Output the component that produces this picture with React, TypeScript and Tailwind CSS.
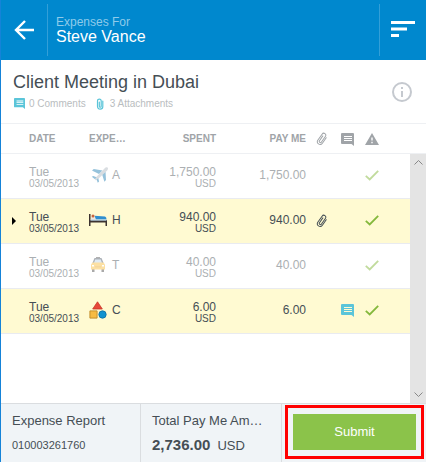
import type { ReactNode } from "react";

interface IconProps {
  className?: string;
}

interface Expense {
  id: number;
  day: string;
  date: string;
  type: string;
  icon: ReactNode;
  amount: string;
  currency: string;
  active: boolean;
  current?: boolean;
  hasAttachment?: boolean;
  hasComment?: boolean;
}

function CommentIcon({ className }: IconProps) {
  return (
    <svg viewBox="0 0 13 13" className={className} fill="currentColor" aria-hidden="true">
      <path
        fillRule="evenodd"
        d="M1 0h11a1 1 0 0 1 1 1v12l-2.500-2H1a1 1 0 0 1-1-1V1a1 1 0 0 1 1-1zM3 3v1h8V3zM3 5v1h8V5zM3 7v1h8V7z"
      />
    </svg>
  );
}

function ClipIcon({ className }: IconProps) {
  return (
    <svg
      viewBox="0 0 12 14"
      className={className}
      fill="none"
      stroke="currentColor"
      strokeLinecap="round"
      aria-hidden="true"
    >
      <path
        transform="rotate(35 6 7)"
        d="M8.700 3.500v6.700c0 3.800-5.400 3.800-5.400 0V3c0-2.800 4-2.800 4 0v6.800c0 1.700-2.400 1.700-2.400 0V4"
      />
    </svg>
  );
}

function SmallClipIcon({ className }: IconProps) {
  return (
    <svg
      viewBox="0 0 8 12"
      className={className}
      fill="none"
      stroke="currentColor"
      strokeWidth="1.200"
      strokeLinecap="round"
      aria-hidden="true"
    >
      <path d="M6.800 3v5.500c0 3.500-5.300 3.500-5.300 0V3c0-2.600 3.700-2.600 3.700 0v5.200c0 1.400-1.900 1.400-1.900 0V4" />
    </svg>
  );
}

function WarningIcon({ className }: IconProps) {
  return (
    <svg viewBox="0 0 14 12" className={className} fill="currentColor" aria-hidden="true">
      <path fillRule="evenodd" d="M7 0l7 12H0zM6.300 4.500v3h1.400v-3zM6.300 8.700v1.500h1.400V8.700z" />
    </svg>
  );
}

function CheckIcon({ className }: IconProps) {
  return (
    <svg
      viewBox="0 0 14 11"
      className={className}
      fill="none"
      stroke="currentColor"
      strokeWidth="1.800"
      aria-hidden="true"
    >
      <path d="M.8 5.800 4.700 9.500 13.200.9" />
    </svg>
  );
}

function PlaneIcon() {
  return (
    <svg viewBox="0 0 18 16" className="h-4 w-[18px]" aria-hidden="true">
      <path d="M1 3.500 2.800 2l8.700 1.500-3.500 3.500zM11 7l3.500-2.500L15 13l-1.600 1.800z" fill="#2f87b8" />
      <path d="M16.500.5c1 .8.300 2.300-.6 3.200L6.500 12.500l-2.500.8.600-2.500L13.500 1.500c.9-.9 2-1.600 3-1z" fill="#b4bcc4" />
      <path d="M.8 9.800l1.500-.8 3.200 1.200-1.500 2zM5.500 12.500l1.800-1.200.8 3.200-1.300 1.300z" fill="#2f87b8" />
    </svg>
  );
}

function BedIcon() {
  return (
    <svg viewBox="0 0 18 12" className="h-3 w-[18px]" aria-hidden="true">
      <path d="M0 0h1.500v6H18v6h-1.500V8.500h-15V12H0z" fill="#3d3330" />
      <path d="M2 3h5v3H2z" fill="#f0e6dc" />
      <circle cx="4" cy="2" r="1.500" fill="#c9643f" />
      <path d="M5.500 1.800l10.500.7q1.500.4 1.500 3H7z" fill="#2f8fd0" />
      <path d="M1.500 5.500H17.500v1.200H1.500z" fill="#b9d3e6" />
    </svg>
  );
}

function TaxiIcon() {
  return (
    <svg viewBox="0 0 14 15" className="h-[15px] w-3.5" aria-hidden="true">
      <path d="M5 0h4v1.500H5z" fill="#666" />
      <path d="M3.500 1h7L12.500 6h-11z" fill="#5b6470" />
      <path d="M4.200 2.500h5.600L11 6H3z" fill="#c2d8ea" />
      <path d="M1 12h2.500v3H1zM10.500 12H13v3h-2.500z" fill="#555" />
      <path d="M1.500 5.500h11L14 7.500V12.500H0V7.500z" fill="#fbc24a" />
      <path d="M1 8h2v1.500H1zM11 8h2v1.500h-2z" fill="#fff" />
      <path d="M4 9.500h6v.8H4z" fill="#d9a03a" />
    </svg>
  );
}

function ShapesIcon() {
  return (
    <svg viewBox="0 0 18 18" className="size-[18px]" aria-hidden="true">
      <path d="M8.500.8 13.300 8H3.700z" fill="#e8473a" stroke="#c73527" strokeWidth=".8" />
      <path d="M.9 9.900h7.200v7.200H.9z" fill="#f6bb43" stroke="#c08a28" strokeWidth=".9" />
      <circle cx="13.500" cy="13.500" r="3.700" fill="#1292cf" stroke="#0b6ea3" strokeWidth=".8" />
    </svg>
  );
}

const expenses: Expense[] = [
  {
    id: 1,
    day: "Tue",
    date: "03/05/2013",
    type: "A",
    icon: <PlaneIcon />,
    amount: "1,750.00",
    currency: "USD",
    active: false,
  },
  {
    id: 2,
    day: "Tue",
    date: "03/05/2013",
    type: "H",
    icon: <BedIcon />,
    amount: "940.00",
    currency: "USD",
    active: true,
    current: true,
    hasAttachment: true,
  },
  {
    id: 3,
    day: "Tue",
    date: "03/05/2013",
    type: "T",
    icon: <TaxiIcon />,
    amount: "40.00",
    currency: "USD",
    active: false,
  },
  {
    id: 4,
    day: "Tue",
    date: "03/05/2013",
    type: "C",
    icon: <ShapesIcon />,
    amount: "6.00",
    currency: "USD",
    active: true,
    hasComment: true,
  },
];

function Header() {
  return (
    <header className="flex h-[60px] items-stretch bg-[#0088ce] py-1 text-white">
      <button aria-label="Back" className="flex w-[47px] items-center justify-center border-r border-[#339fd8]">
        <svg
          viewBox="0 0 20 20"
          className="size-5"
          fill="none"
          stroke="currentColor"
          strokeWidth="2.400"
          aria-hidden="true"
        >
          <path d="M20 10H2M11 1 2 10l9 9" />
        </svg>
      </button>
      <div className="flex-1 pl-2 pt-[11px]">
        <p className="text-[12px] leading-[14px] text-[#8fcbea]">Expenses For</p>
        <h1 className="text-[16px] leading-[16px]">Steve Vance</h1>
      </div>
      <button aria-label="Sort" className="flex w-[47px] items-center border-l border-[#339fd8] pb-0.5 pl-[11px]">
        <svg viewBox="0 0 24 16" className="h-4 w-6" fill="currentColor" aria-hidden="true">
          <path d="M0 0h24v3H0zM0 6.500h16v3H0zM0 13h8v3H0z" />
        </svg>
      </button>
    </header>
  );
}

function ReportTitle() {
  return (
    <section className="flex h-[64px] items-center border-b border-[#eef0f3] pl-3 pr-3.5">
      <div className="flex-1 pb-0.5">
        <h2 className="text-[18px] leading-[22px]">Client Meeting in Dubai</h2>
        <div className="mt-1 flex items-center text-[10px] leading-[14px] text-[#b9bdc0]">
          <CommentIcon className="mr-1 ml-px size-[11px] text-[#5bc5d9]" />
          <span>0 Comments</span>
          <SmallClipIcon className="ml-2.5 mr-1.5 h-3 w-2 text-[#5bc5d9]" />
          <span>3 Attachments</span>
        </div>
      </div>
      <button aria-label="Report details" className="text-[#c5c9cf]">
        <svg viewBox="0 0 20 20" className="size-5" fill="none" stroke="currentColor" strokeWidth="2" aria-hidden="true">
          <circle cx="10" cy="10" r="9" />
          <path d="M10 9v6M10 5v2" />
        </svg>
      </button>
    </section>
  );
}

function ExpenseRow({ expense }: { expense: Expense }) {
  return (
    <tr
      className={`h-[45px] border-b border-[#e9ebf0] ${
        expense.active ? "bg-[#fffad2]" : "text-[#abafb2]"
      }`}
    >
      <td className="pl-[11px]">
        {expense.current && (
          <svg viewBox="0 0 4 8" className="h-2 w-1 fill-black" aria-hidden="true">
            <path d="M0 0l4 4-4 4z" />
          </svg>
        )}
      </td>
      <td className="pt-1">
        <div className="text-[12px] leading-[12px]">{expense.day}</div>
        <div className="text-[10px] leading-[12px]">{expense.date}</div>
      </td>
      <td className="pb-0.5">
        <div className="flex items-center">
          <span className={`flex w-[23px] justify-start ${expense.active ? "" : "pl-0.5 opacity-50"}`}>
            {expense.icon}
          </span>
          <span className="text-[12px] leading-[14px]">{expense.type}</span>
        </div>
      </td>
      <td className="pt-1 text-right">
        <div className="text-[12px] leading-[12px]">{expense.amount}</div>
        <div className="text-[10px] leading-[12px]">{expense.currency}</div>
      </td>
      <td className="pb-0.5 text-right text-[12px] leading-[14px]">{expense.amount}</td>
      <td>{expense.hasAttachment && <ClipIcon className="mx-auto h-3.5 w-3" />}</td>
      <td>{expense.hasComment && <CommentIcon className="mx-auto size-[13px] text-[#5bc5d9]" />}</td>
      <td>
        <CheckIcon
          className={`mx-auto h-[11px] w-3.5 text-[#84b83c] ${expense.active ? "" : "opacity-50"}`}
        />
      </td>
      <td />
    </tr>
  );
}

function ExpenseTable() {
  return (
    <section className="flex flex-1">
      <div className="flex-1">
        <table className="w-full table-fixed border-collapse">
          <colgroup>
            <col className="w-7" />
            <col className="w-[60px]" />
            <col className="w-[37px]" />
            <col />
            <col />
            <col className="w-8" />
            <col className="w-[18px]" />
            <col className="w-8" />
            <col className="w-[22px]" />
          </colgroup>
          <thead>
            <tr className="h-[29px] border-b border-[#eef0f3] text-[10px] leading-[16px] text-[#a0a4a8]">
              <th />
              <th className="pt-0.5 text-left">DATE</th>
              <th className="pt-0.5 text-left">EXPE…</th>
              <th className="pt-0.5 text-right">SPENT</th>
              <th className="pt-0.5 text-right">PAY ME</th>
              <th className="pt-0.5" aria-label="Attachments">
                <ClipIcon className="mx-auto h-3.5 w-3" />
              </th>
              <th className="pt-0.5" aria-label="Comments">
                <CommentIcon className="mx-auto size-[13px]" />
              </th>
              <th className="pt-0.5" aria-label="Status">
                <WarningIcon className="mx-auto h-3 w-3.5" />
              </th>
              <th />
            </tr>
          </thead>
          <tbody>
            {expenses.map((expense) => (
              <ExpenseRow key={expense.id} expense={expense} />
            ))}
          </tbody>
        </table>
      </div>
      <div className="flex w-4 flex-col">
        <div className="h-[30px] border-b border-[#eef0f3]" />
        <div className="flex flex-1 flex-col items-center justify-between bg-[#e4e4e4] py-1.5 text-[#888]">
          <svg viewBox="0 0 9 5" className="h-[5px] w-[9px]" fill="none" stroke="currentColor" aria-hidden="true">
            <path d="M.5 4.500l4-4 4 4" />
          </svg>
          <svg viewBox="0 0 9 5" className="h-[5px] w-[9px]" fill="none" stroke="currentColor" aria-hidden="true">
            <path d="M.5.5l4 4 4-4" />
          </svg>
        </div>
      </div>
    </section>
  );
}

function Footer() {
  return (
    <footer className="flex h-[59px] border-t border-[#dadde0] bg-[#f0f4f7]">
      <div className="w-[140px] border-r border-[#dadde0] pl-[11px] pt-[9px]">
        <p className="text-[13px] leading-[16px]">Expense Report</p>
        <p className="mt-[7px] text-[11px] leading-[18px]">010003261760</p>
      </div>
      <div className="min-w-0 flex-1 border-r border-[#dadde0] pl-[11px] pt-[9px]">
        <p className="text-[13px] leading-[16px]">Total Pay Me Am…</p>
        <p className="mt-[7px] flex items-baseline gap-[7px] leading-[18px]">
          <span className="text-[15px] font-bold">2,736.00</span>
          <span className="text-[13px]">USD</span>
        </p>
      </div>
      <div className="w-[144px] pl-[3px] pr-0.5 pt-px">
        <div className="border-3 border-[#f00] px-[5px] py-1.5">
          <button className="h-9 w-full bg-[#8bc34a] text-[13px] leading-[16px] text-white">Submit</button>
        </div>
      </div>
    </footer>
  );
}

export default function App() {
  return (
    <main className="flex min-h-screen flex-col border-l border-[#1583d8] bg-white font-['Liberation_Sans',Arial,sans-serif] text-[#454e55]">
      <Header />
      <ReportTitle />
      <ExpenseTable />
      <Footer />
    </main>
  );
}
